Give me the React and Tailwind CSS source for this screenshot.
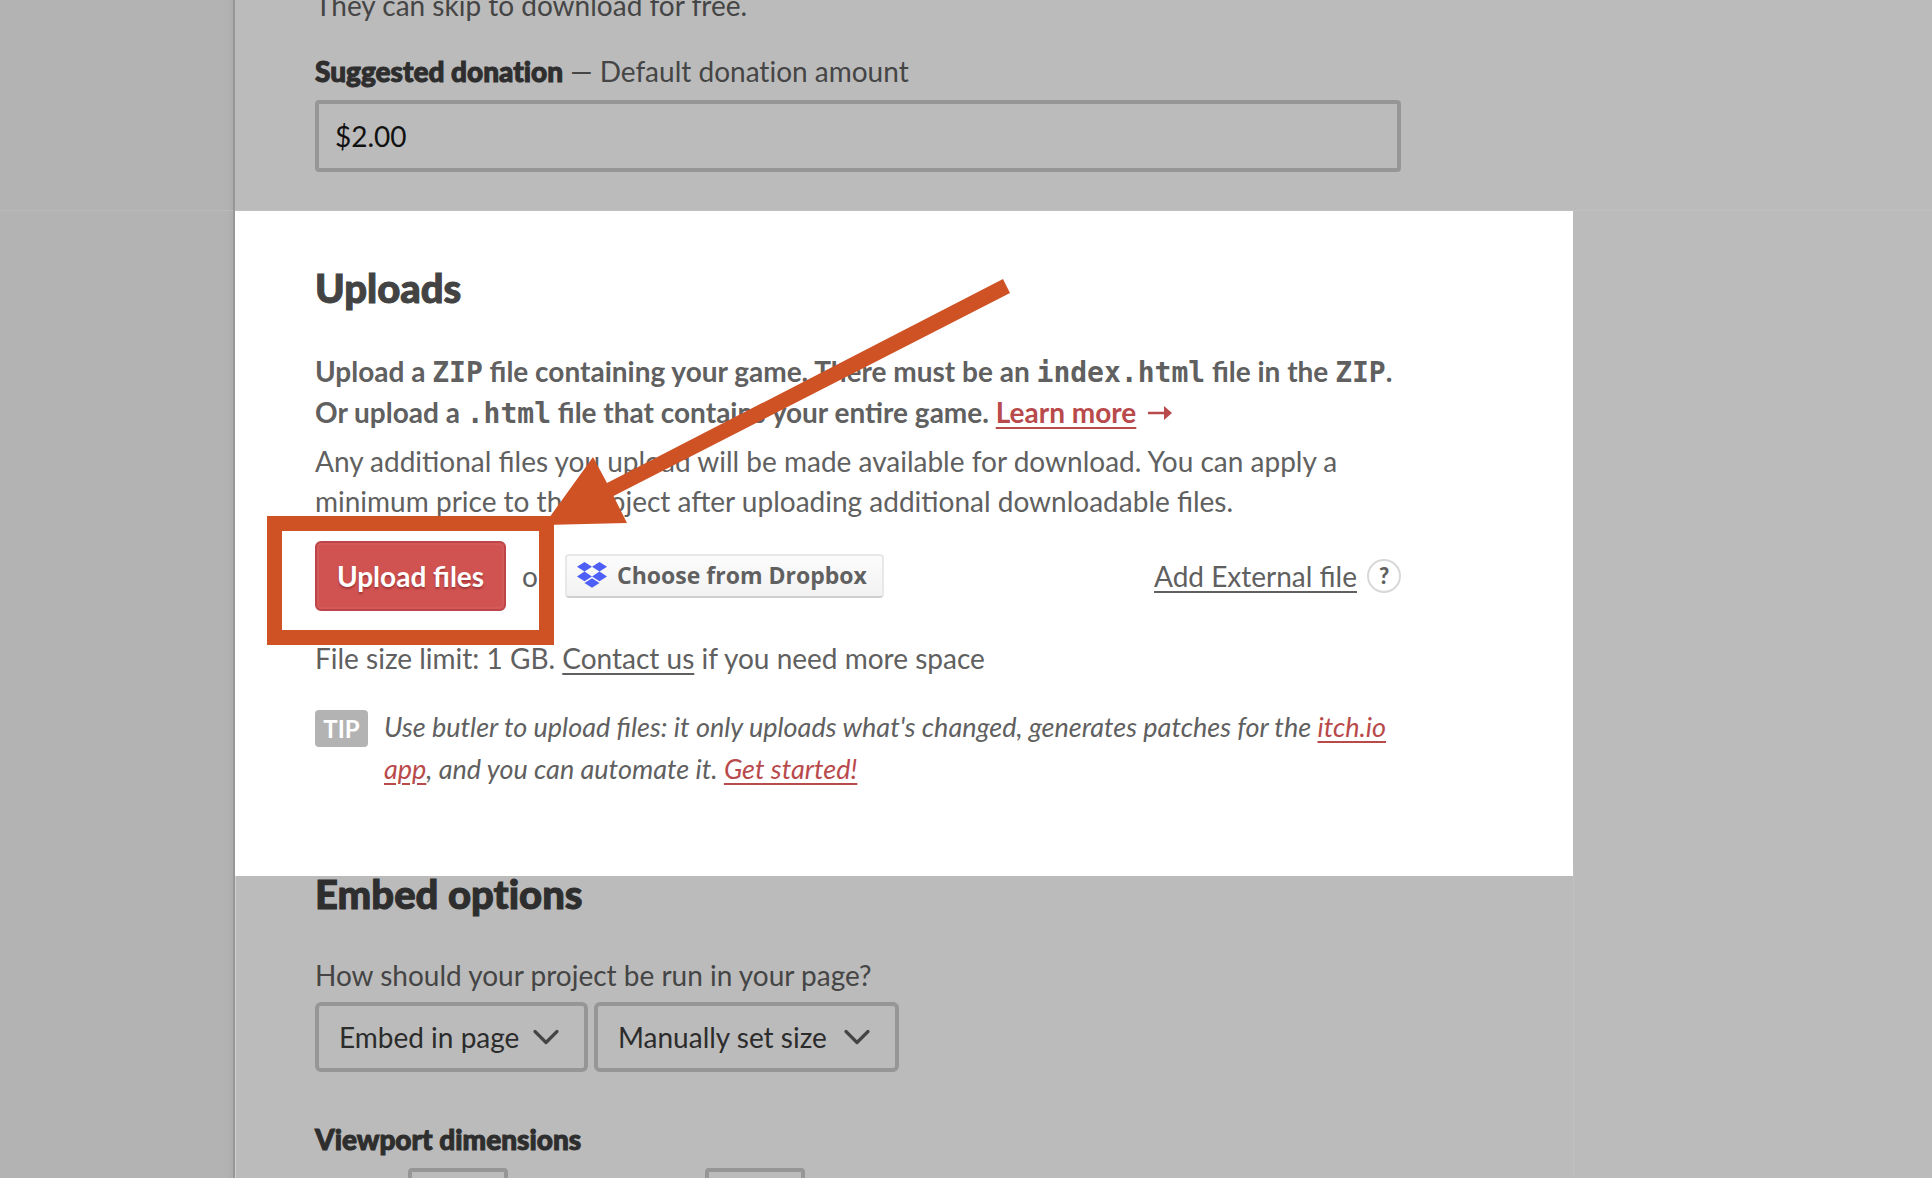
import React from "react";

const LINK = "text-[#b94a4c] underline decoration-2 underline-offset-4";
const HEAVY = "font-black [-webkit-text-stroke:1px_currentColor] [font-variant-ligatures:no-common-ligatures]";

function Chevron() {
  return (
    <svg
      className="pointer-events-none absolute top-1/2 right-7 h-5 w-7 -translate-y-1/2"
      viewBox="0 0 28 20"
      fill="none"
      stroke="#454545"
      strokeWidth="3.2"
      strokeLinecap="round"
      strokeLinejoin="round"
      aria-hidden="true"
    >
      <path d="M3 4.500l11 11L25 4.500" />
    </svg>
  );
}

function Select({ label, value, width }) {
  return (
    <div className="relative">
      <select
        aria-label={label}
        defaultValue={value}
        className={
          "h-[70px] appearance-none rounded-md border-4 border-[#969696] bg-transparent pb-px pl-5 text-[28px] text-[#2c2c2c] " +
          width
        }
      >
        <option>{value}</option>
      </select>
      <Chevron />
    </div>
  );
}

function DropboxLogo() {
  return (
    <svg className="h-[26px] w-[30px]" viewBox="0 0 30 26" fill="#4d5ff5" aria-hidden="true">
      <path d="M7.5 0L15 4.8 7.5 9.6 0 4.8zM22.5 0L30 4.8 22.5 9.6 15 4.8zM7.5 9.6L15 14.4 7.5 19.2 0 14.4zM22.5 9.6L30 14.4 22.5 19.2 15 14.4zM15 16.2L22.5 21 15 25.8 7.5 21z" />
    </svg>
  );
}

function Code({ children }) {
  return <code className="font-['DejaVu_Sans_Mono',monospace] leading-none">{children}</code>;
}

function Annotation() {
  return (
    <div className="pointer-events-none absolute inset-0" aria-hidden="true">
      <div className="absolute top-[305px] left-8 h-[129px] w-[287px] border-[15px] border-[#cf5224]" />
      <svg className="absolute top-[68px] left-[309px] h-[250px] w-[470px]" viewBox="0 0 470 250" fill="#cf5224">
        <path d="M459 0L466 14 69.500 217 83 244 0 246 49 178 63 204z" />
      </svg>
    </div>
  );
}

export default function App() {
  return (
    <div className="flex h-screen overflow-hidden bg-[#bbbbbb] font-['Lato',sans-serif] text-[28px] text-[#454545]">
      <aside className="flex w-[235px] shrink-0 flex-col border-r-2 border-[#979797] bg-[#b3b3b3] shadow-[inset_-6px_0_6px_-4px_rgba(0,0,0,0.05)]">
        <div className="h-[211px] shrink-0 border-b border-[#b9b9b9]" />
      </aside>

      <main className="min-w-0 flex-1">
        <section className="flex h-[210px] flex-col justify-end pb-[38px] pl-20">
          <p className="leading-[34px]">They can skip to download for free.</p>
          <label
            htmlFor="donation"
            className="mt-8 leading-[34px] [font-variant-ligatures:no-common-ligatures]"
          >
            <strong className={HEAVY + " text-[#2e2e2e]"}>Suggested donation</strong> — Default donation amount
          </label>
          <input
            id="donation"
            defaultValue="$2.00"
            className="mt-3 h-[72px] w-full max-w-[1086px] shrink-0 rounded border-4 border-[#969696] bg-transparent px-4 text-[28px] text-[#111111]"
          />
        </section>

        <div className="border-t border-[#c0c0c0]">
          <section className="relative max-w-[1338px] bg-white pt-[53px] pr-[172px] pb-[86px] pl-20 text-[#606060]">
            <h2 className={HEAVY + " text-[40px] leading-[48px] text-[#434343]"}>Uploads</h2>
            <p className="mt-[39px] leading-[41px] font-bold">
              Upload a <Code>ZIP</Code> file containing your game. There must be an <Code>index.html</Code> file in the{" "}
              <Code>ZIP</Code>.<br />
              Or upload a <Code>.html</Code> file that contains your entire game.{" "}
              <a href="#learn" className={LINK}>
                Learn more
              </a>
              <svg
                className="ml-3 inline-block h-5 w-6 align-baseline"
                viewBox="0 0 24 20"
                fill="#b94a4c"
                aria-hidden="true"
              >
                <path d="M0 8.800h16V3l8 7-8 7v-5.800H0z" />
              </svg>
            </p>
            <p className="mt-2 leading-10">
              Any additional files you upload will be made available for download. You can apply a minimum price to the
              project after uploading additional downloadable files.
            </p>

            <div className="mt-5 flex items-center">
              <button
                type="button"
                className="h-[70px] w-[191px] rounded-md border-2 border-[#bd4548] bg-[#d05351] font-bold text-white shadow-[inset_0_0_0_2px_#d35a5b] text-shadow-[0_2px_2px_#a03638]"
              >
                Upload files
              </button>
              <span className="ml-4">or</span>
              <button
                type="button"
                className="ml-[17px] flex h-[44px] w-[319px] items-center gap-[10px] rounded border-2 border-b-[#cfcfcf] border-[#e8e8e8] bg-linear-to-b from-[#fcfcfc] to-[#f2f2f2] pb-[2px] pl-[10px] font-['Open_Sans',sans-serif] text-[23px] font-bold whitespace-nowrap"
              >
                <DropboxLogo />
                Choose from Dropbox
              </button>
              <a href="#external" className="ml-auto underline decoration-2 underline-offset-4">
                Add External file
              </a>
              <button
                type="button"
                aria-label="Help"
                className="ml-[10px] size-[34px] rounded-full border-2 border-[#d8d8d8] text-[22px] leading-none font-black"
              >
                ?
              </button>
            </div>

            <p className="mt-[27px] leading-10">
              File size limit: 1 GB.{" "}
              <a href="#contact" className="underline decoration-2 underline-offset-4">
                Contact us
              </a>{" "}
              if you need more space
            </p>

            <div className="mt-7 flex items-start gap-4">
              <span className="mt-1 h-[37px] w-[53px] shrink-0 rounded bg-[#b3b3b3] text-center text-2xl leading-[38px] font-bold text-white">
                TIP
              </span>
              <p className="text-[27px] leading-[42px] italic">
                Use butler to upload files: it only uploads what's changed, generates patches for the{" "}
                <a href="#app" className={LINK}>
                  itch.io app
                </a>
                , and you can automate it.{" "}
                <a href="#start" className={LINK}>
                  Get started!
                </a>
              </p>
            </div>
            <Annotation />
          </section>
        </div>

        <section className="max-w-[1339px] border-x border-l-[#d0d0d0] border-r-[#c1c1c1] pb-10 pl-[79px]">
          <h2 className={HEAVY + " -mt-[6px] text-[40px] leading-[48px] text-[#2e2e2e]"}>Embed options</h2>
          <p className="mt-10 leading-[34px]">How should your project be run in your page?</p>
          <div className="mt-[10px] flex gap-[6px]">
            <Select label="Embed mode" value="Embed in page" width="w-[273px]" />
            <Select label="Size mode" value="Manually set size" width="w-[305px]" />
          </div>
          <h3 className={HEAVY + " mt-[50px] leading-[34px] text-[#2e2e2e]"}>Viewport dimensions</h3>
          <div className="mt-3 flex gap-[197px] pl-[93px]">
            <input aria-label="Width" className="h-[72px] w-[100px] rounded border-4 border-[#969696]" />
            <input aria-label="Height" className="h-[72px] w-[100px] rounded border-4 border-[#969696]" />
          </div>
        </section>
      </main>
    </div>
  );
}
